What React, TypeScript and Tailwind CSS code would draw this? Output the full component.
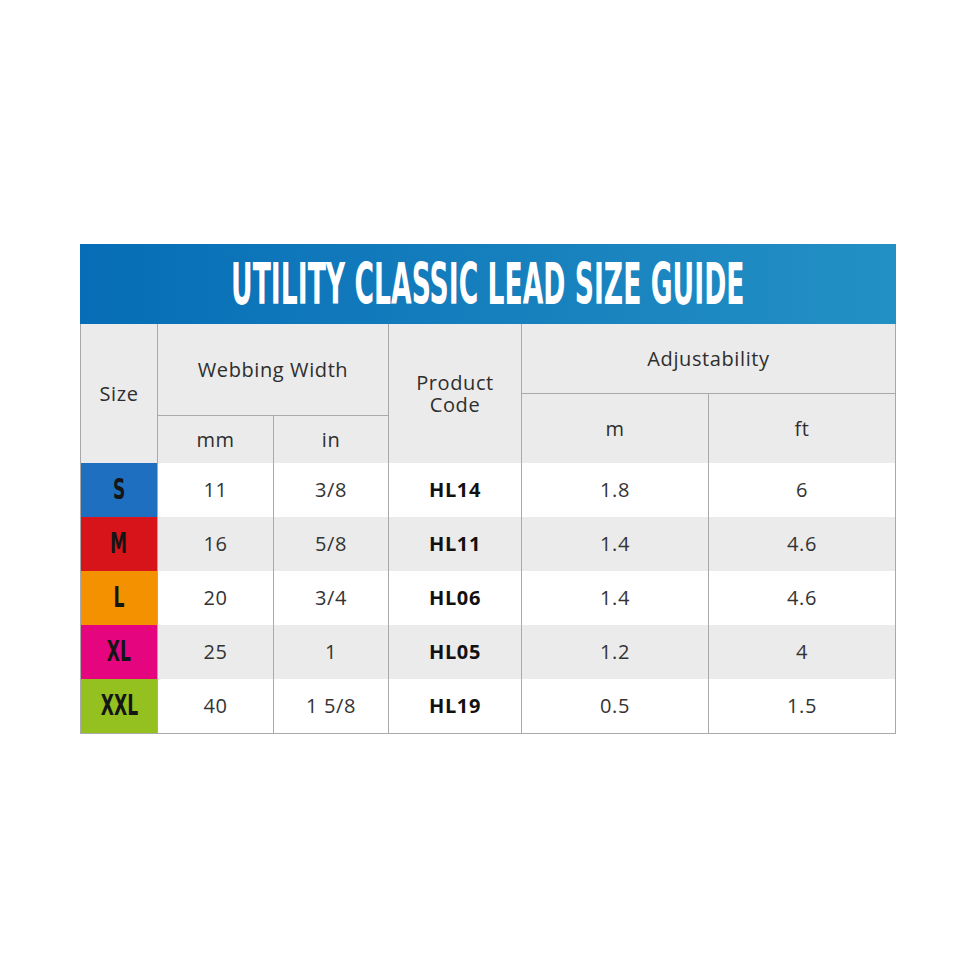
import React from "react";

const rows = [
  { size: "S", bg: "bg-[#1e6fbf]", mm: "11", inch: "3/8", code: "HL14", m: "1.8", ft: "6" },
  { size: "M", bg: "bg-[#d8141b]", mm: "16", inch: "5/8", code: "HL11", m: "1.4", ft: "4.6" },
  { size: "L", bg: "bg-[#f39100]", mm: "20", inch: "3/4", code: "HL06", m: "1.4", ft: "4.6" },
  { size: "XL", bg: "bg-[#e5067f]", mm: "25", inch: "1", code: "HL05", m: "1.2", ft: "4" },
  { size: "XXL", bg: "bg-[#94c120]", mm: "40", inch: "1 5/8", code: "HL19", m: "0.5", ft: "1.5" },
];

const body = { fontFamily: "'Open Sans', Lato, sans-serif" };
const cond = { fontFamily: "'DejaVu Sans Condensed', 'DejaVu Sans', sans-serif" };

export default function App() {
  return (
    <div className="w-[980px] h-[980px] bg-white pt-[244px] pl-[80px]" style={body}>
      <div className="w-[816px]">
        <div className="h-[80px] bg-gradient-to-r from-[#066db6] to-[#2390c4] flex items-center justify-center overflow-hidden">
          <span
            className="text-white font-bold text-[57px] leading-none inline-block whitespace-nowrap scale-x-[0.52]"
            style={cond}
          >
            UTILITY CLASSIC LEAD SIZE GUIDE
          </span>
        </div>
        <div className="border-l border-r border-b border-[#a9a9a9] tracking-[0.6px]">
          <div className="flex h-[139px] bg-[#ebebeb] text-[#2e2e2e] text-[20px]">
            <div className="w-[77px] flex items-center justify-center border-r border-[#a9a9a9]">Size</div>
            <div className="w-[231px] flex flex-col border-r border-[#a9a9a9]">
              <div className="h-[92px] flex items-center justify-center border-b border-[#a9a9a9]">Webbing Width</div>
              <div className="flex-1 flex">
                <div className="w-[116px] flex items-center justify-center border-r border-[#a9a9a9]">mm</div>
                <div className="flex-1 flex items-center justify-center">in</div>
              </div>
            </div>
            <div className="w-[133px] flex flex-col items-center justify-center gap-[3px] border-r border-[#a9a9a9]">
              <span className="leading-[19px]">Product</span>
              <span className="leading-[19px]">Code</span>
            </div>
            <div className="flex-1 flex flex-col">
              <div className="h-[70px] flex items-center justify-center border-b border-[#a9a9a9]">Adjustability</div>
              <div className="flex-1 flex">
                <div className="w-[187px] flex items-center justify-center border-r border-[#a9a9a9]">m</div>
                <div className="flex-1 flex items-center justify-center">ft</div>
              </div>
            </div>
          </div>
          {rows.map((r, i) => (
            <div
              key={r.size}
              className={`flex h-[54px] text-[20px] text-[#333] ${i % 2 === 1 ? "bg-[#ebebeb]" : "bg-white"}`}
            >
              <div className={`w-[77px] flex items-center justify-center border-r border-[#a9a9a9] ${r.bg}`}>
                <span className="text-[#151515] font-bold text-[28px] leading-none tracking-normal inline-block scale-x-[0.68]" style={cond}>
                  {r.size}
                </span>
              </div>
              <div className="w-[116px] flex items-center justify-center border-r border-[#a9a9a9]">{r.mm}</div>
              <div className="w-[115px] flex items-center justify-center border-r border-[#a9a9a9]">{r.inch}</div>
              <div className="w-[133px] flex items-center justify-center border-r border-[#a9a9a9] font-bold text-[#111]">{r.code}</div>
              <div className="w-[187px] flex items-center justify-center border-r border-[#a9a9a9]">{r.m}</div>
              <div className="flex-1 flex items-center justify-center">{r.ft}</div>
            </div>
          ))}
        </div>
      </div>
    </div>
  );
}
